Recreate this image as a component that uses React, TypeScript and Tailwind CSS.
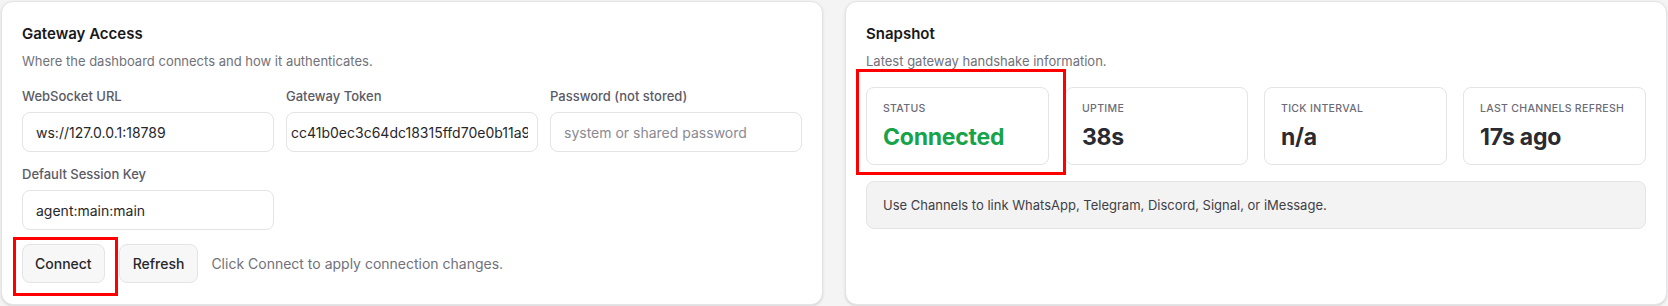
import React from "react";

const font = { fontFamily: "Inter, 'Noto Sans', sans-serif" };

interface FieldProps {
  label: string;
  value?: string;
  placeholder?: string;
  tight?: boolean;
}

function Field({ label, value, placeholder, tight = false }: FieldProps) {
  return (
    <label className="flex flex-col gap-[7px]">
      <span className="text-[13px] leading-[18px] font-medium text-[#5b5b66]">{label}</span>
      <input
        readOnly
        value={value}
        placeholder={placeholder}
        className={`h-10 w-full rounded-lg border border-[#e4e4e7] bg-white text-[14px] text-[#27272a] placeholder:text-[#8a8a94] outline-none ${
          tight ? "pl-[4px] pr-[9px]" : "px-[13px]"
        }`}
      />
    </label>
  );
}

function Stat({ label, value, accent = false }: { label: string; value: string; accent?: boolean }) {
  return (
    <div className="rounded-lg border border-[#e4e4e7] bg-white px-4 pt-[14px] pb-3">
      <div className="whitespace-nowrap text-[10.5px] leading-[14px] font-medium uppercase tracking-[0.03em] text-[#6b6b76]">
        {label}
      </div>
      <div
        className={`mt-[6px] text-[23px] leading-[30px] font-bold tracking-[-0.01em] ${
          accent ? "text-[#16a34a]" : "text-[#2a2a30]"
        }`}
      >
        {value}
      </div>
    </div>
  );
}

export default function App() {
  return (
    <div className="relative h-[306px] w-[1668px] bg-[#f4f4f5] px-px py-px" style={font}>
      <div className="grid h-full grid-cols-2 gap-[22px]">
        {/* Gateway access */}
        <section className="rounded-xl border border-[#e4e4e7] bg-white px-5 pt-[21px] pb-5 shadow-sm">
          <h2 className="text-[15px] leading-[22px] font-semibold text-[#18181b]">Gateway Access</h2>
          <p className="mt-[7px] text-[13px] leading-[18px] text-[#71717a]">
            Where the dashboard connects and how it authenticates.
          </p>
          <div className="mt-[17px] grid grid-cols-3 gap-x-3 gap-y-[13px]">
            <Field label="WebSocket URL" value="ws://127.0.0.1:18789" />
            <Field label="Gateway Token" value="cc41b0ec3c64dc18315ffd70e0b11a9c27f4" tight />
            <Field label="Password (not stored)" placeholder="system or shared password" />
            <Field label="Default Session Key" value="agent:main:main" />
          </div>
          <div className="mt-[14px] flex items-center gap-[14px]">
            <button className="h-[39px] rounded-lg border border-[#e4e4e7] bg-[#f7f7f8] px-[12px] text-[14px] font-medium text-[#27272a]">
              Connect
            </button>
            <button className="h-[39px] rounded-lg border border-[#e4e4e7] bg-[#f7f7f8] px-[13px] text-[14px] font-medium text-[#27272a]">
              Refresh
            </button>
            <span className="-ml-px text-[14px] text-[#71717a]">Click Connect to apply connection changes.</span>
          </div>
        </section>

        {/* Snapshot */}
        <section className="rounded-xl border border-[#e4e4e7] bg-white px-5 pt-[21px] pb-5 shadow-sm">
          <h2 className="text-[15px] leading-[22px] font-semibold text-[#18181b]">Snapshot</h2>
          <p className="mt-[7px] text-[13px] leading-[18px] text-[#71717a]">Latest gateway handshake information.</p>
          <div className="mt-[17px] grid grid-cols-4 gap-4">
            <Stat label="Status" value="Connected" accent />
            <Stat label="Uptime" value="38s" />
            <Stat label="Tick Interval" value="n/a" />
            <Stat label="Last Channels Refresh" value="17s ago" />
          </div>
          <div className="mt-4 rounded-lg border border-[#e4e4e7] bg-[#f3f3f4] px-4 py-[14px] text-[13px] leading-[18px] text-[#3f3f46]">
            Use Channels to link WhatsApp, Telegram, Discord, Signal, or iMessage.
          </div>
        </section>
      </div>

      {/* annotation boxes */}
      <div className="pointer-events-none absolute left-[13px] top-[237px] h-[59px] w-[105px] border-[3px] border-[#ff0000]" />
      <div className="pointer-events-none absolute left-[856px] top-[69px] h-[106px] w-[210px] border-[3px] border-[#ff0000]" />
    </div>
  );
}
